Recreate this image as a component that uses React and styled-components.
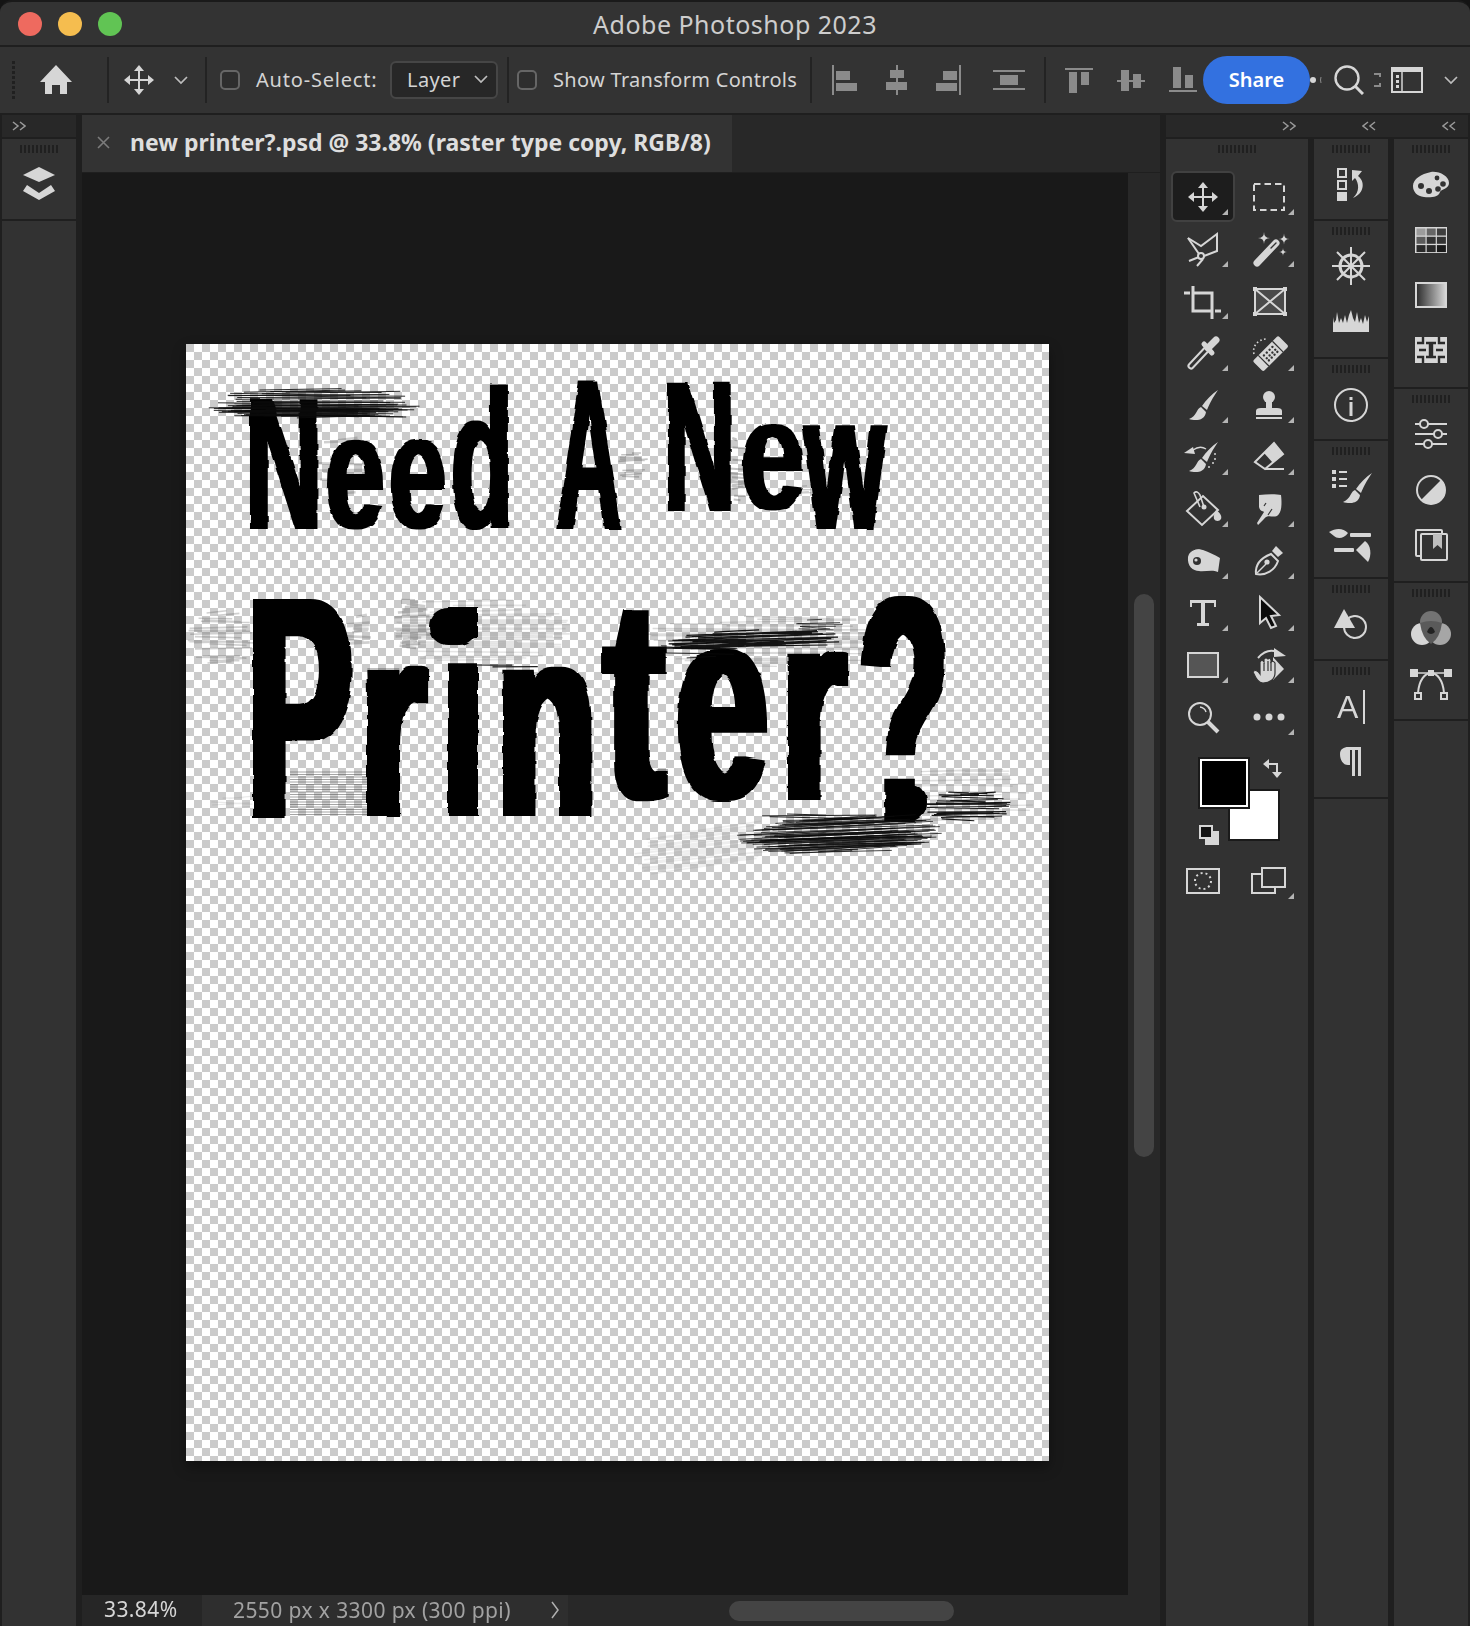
import React from "react";
import styled, { createGlobalStyle } from "styled-components";

const C = "#d6d6d6";
const BG = "#323232";
const GREY = "#8b8b8b";

const GlobalStyle = createGlobalStyle`
  html, body {
    margin: 0;
    padding: 0;
    background: #141414;
  }
  * {
    box-sizing: border-box;
  }
`;

const Window = styled.div`
  width: 1470px;
  height: 1626px;
  display: flex;
  flex-direction: column;
  background: #1f1f1f;
  border-top: 2px solid #1a1a1a;
  border-radius: 12px 12px 0 0;
  overflow: hidden;
  font-family: "Noto Sans", "Liberation Sans", sans-serif;
`;

const TitleBar = styled.div`
  height: 43px;
  flex: none;
  display: grid;
  grid-template-columns: 1fr auto 1fr;
  align-items: center;
  background: #333333;
  margin-bottom: 2px;
`;

const Lights = styled.div`
  display: flex;
  gap: 16px;
  padding-left: 18px;
`;

const Light = styled.span`
  width: 24px;
  height: 24px;
  border-radius: 50%;
  background: ${(p) => p.$color};
`;

const Title = styled.div`
  font-size: 25px;
  color: #cdcdcd;
  letter-spacing: 0.5px;
  padding-top: 1px;
  white-space: nowrap;
`;

const OptionsBar = styled.div`
  height: 66px;
  flex: none;
  display: flex;
  align-items: center;
  padding-left: 12px;
  background: #333333;
`;

const Slot = styled.svg`
  flex: none;
  display: block;
  margin-left: ${(p) => p.$ml || 0}px;
`;

const BarGrip = styled.div`
  width: 3px;
  height: 38px;
  flex: none;
  background: repeating-linear-gradient(180deg, #202020 0 3px, transparent 3px 5px);
`;

const BarSep = styled.div`
  width: 2px;
  height: 46px;
  flex: none;
  margin-left: ${(p) => p.$ml}px;
  background: #232323;
`;

const CheckBox = styled.div`
  width: 20px;
  height: 20px;
  flex: none;
  margin-left: ${(p) => p.$ml}px;
  border: 2px solid #666666;
  border-radius: 5px;
  background: #2e2e2e;
`;

const OptionLabel = styled.div`
  flex: none;
  width: ${(p) => p.$w}px;
  margin-left: 16px;
  padding-bottom: 2px;
  font-size: 20px;
  letter-spacing: ${(p) => p.$spacing}px;
  color: #d4d4d4;
  white-space: nowrap;
`;

const Select = styled.div`
  width: 108px;
  height: 38px;
  flex: none;
  display: flex;
  align-items: center;
  justify-content: space-between;
  padding: 0 8px 2px 15px;
  background: #272727;
  border: 2px solid #464646;
  border-radius: 6px;
  font-size: 20px;
  letter-spacing: 0.4px;
  color: #d4d4d4;
`;

const ShareButton = styled.div`
  width: 107px;
  height: 48px;
  flex: none;
  margin-left: ${(p) => p.$ml}px;
  display: flex;
  align-items: center;
  justify-content: center;
  padding-bottom: 2px;
  background: #3371e0;
  border-radius: 24px;
  color: #ffffff;
  font-size: 20px;
  font-weight: 600;
`;

const Workspace = styled.div`
  flex: 1;
  min-height: 0;
  display: flex;
  padding-top: 2px;
  background: #1f1f1f;
`;

const LeftDock = styled.div`
  width: 74px;
  flex: none;
  margin: 0 6px 0 2px;
  display: flex;
  flex-direction: column;
  gap: 2px;
`;

const CollapseRow = styled.div`
  height: 22px;
  flex: none;
  display: flex;
  align-items: center;
  background: #282828;
  padding-left: 10px;
`;

const Main = styled.div`
  width: 1078px;
  flex: none;
  display: flex;
  flex-direction: column;
`;

const TabBar = styled.div`
  height: 57px;
  flex: none;
  margin-bottom: 1px;
  display: flex;
  background: #282828;
`;

const Tab = styled.div`
  width: 650px;
  display: flex;
  align-items: center;
  padding: 0 0 3px 15px;
  gap: 20px;
  background: #333333;
  color: #dedede;
  font-size: 23px;
  font-weight: 700;
  white-space: nowrap;
`;

const CanvasRow = styled.div`
  flex: 1;
  min-height: 0;
  display: flex;
`;

const Canvas = styled.div`
  width: 1046px;
  flex: none;
  padding: 171px 0 0 104px;
  background: #191919;
`;

const Doc = styled.div`
  width: 863px;
  height: 1117px;
  background-color: #ffffff;
  background-image: conic-gradient(
    #cbcbcb 0 25%,
    transparent 0 50%,
    #cbcbcb 0 75%,
    transparent 0
  );
  background-size: 16px 16px;
  background-position: 8px 0;
  box-shadow: 0 6px 12px rgba(0, 0, 0, 0.35);
  svg {
    display: block;
  }
`;

const ScrollTrack = styled.div`
  flex: 1;
  padding: 421px 6px 0;
  background: #282828;
`;

const ScrollThumb = styled.div`
  height: 563px;
  border-radius: 10px;
  background: #444444;
`;

const StatusBar = styled.div`
  height: 31px;
  flex: none;
  display: flex;
  background: #282828;
  font-size: 21px;
  letter-spacing: 0.4px;
`;

const ZoomValue = styled.div`
  width: 120px;
  padding-left: 22px;
  background: #262626;
  color: #d6d6d6;
  line-height: 29px;
`;

const DocInfo = styled.div`
  width: 366px;
  display: flex;
  align-items: center;
  justify-content: space-between;
  padding: 0 8px 2px 31px;
  background: #2e2e2e;
  color: #a2a2a2;
`;

const StatusScroll = styled.div`
  width: 225px;
  height: 20px;
  margin: 6px 0 0 161px;
  border-radius: 10px;
  background: #444444;
`;

const RightDock = styled.div`
  width: 302px;
  flex: none;
  margin: 0 2px 0 6px;
  display: flex;
  flex-direction: column;
  gap: 2px;
`;

const TopRow = styled.div`
  display: grid;
  grid-template-columns: 142px 74px 74px;
  column-gap: 6px;
  background: #282828;
`;

const DockChevrons = styled.div`
  display: flex;
  align-items: center;
  justify-content: flex-end;
  height: 22px;
  padding-right: 12px;
`;

const Columns = styled.div`
  flex: 1;
  min-height: 0;
  display: grid;
  grid-template-columns: 142px 74px 74px;
  column-gap: 6px;
`;

const Column = styled.div`
  display: flex;
  flex-direction: column;
  gap: 2px;
  min-height: 0;
`;

const Panel = styled.div`
  flex: ${(p) => (p.$h ? `0 0 ${p.$h}px` : "1")};
  display: flex;
  flex-direction: column;
  align-items: center;
  padding-top: 6px;
  background: #323232;
`;

const Grip = styled.div`
  width: 38px;
  height: 8px;
  flex: none;
  margin-bottom: 4px;
  background: repeating-linear-gradient(90deg, #202020 0 2px, transparent 2px 4px);
`;

const PanelIcon = styled.div`
  height: 55px;
  width: 100%;
  flex: none;
  display: flex;
  align-items: center;
  justify-content: center;
`;

const ToolGrid = styled.div`
  width: 132px;
  margin: ${(p) => p.$mt}px 0 0 -2px;
  display: grid;
  grid-template-columns: repeat(2, 66px);
  grid-auto-rows: 52px;
`;

const ToolCell = styled.div`
  position: relative;
  display: flex;
  align-items: center;
  justify-content: center;
  svg {
    position: relative;
  }
  ${(p) =>
    p.$active &&
    `&::before {
      content: "";
      position: absolute;
      inset: 0 1px 1px 1px;
      background: #1d1d1d;
      border: 2px solid #414141;
      border-radius: 6px;
    }`}
  ${(p) =>
    p.$corner &&
    `&::after {
      content: "";
      position: absolute;
      right: 8px;
      bottom: 8px;
      width: 6px;
      height: 6px;
      background: #b4b4b4;
      clip-path: polygon(100% 0, 100% 100%, 0 100%);
    }`}
`;

const ColorArea = styled.div`
  position: relative;
  width: 132px;
  height: 112px;
  flex: none;
  margin-left: -2px;
`;

const Swatch = styled.div`
  position: absolute;
  left: ${(p) => p.$x}px;
  top: ${(p) => p.$y}px;
  width: 52px;
  height: 52px;
  background: ${(p) => p.$fill};
  border: 2px solid #1a1a1a;
  ${(p) => p.$ring && "outline: 2px solid #ffffff; outline-offset: -4px;"}
`;

const Floating = styled.svg`
  position: absolute;
  left: ${(p) => p.$x}px;
  top: ${(p) => p.$y}px;
`;

const ICON_TEXT = "'Liberation Sans', sans-serif";

// all icons are drawn around 0,0 in real pixels
const Icon = ({ children, size = 52 }) => (
  <svg width={size} height={size} viewBox={`${-size / 2} ${-size / 2} ${size} ${size}`}>
    {children}
  </svg>
);

const star = (x, y, r) =>
  `M${x},${y - r}Q${x},${y} ${x + r},${y}Q${x},${y} ${x},${y + r}Q${x},${y} ${x - r},${y}Q${x},${y} ${x},${y - r}Z`;

const MoveGlyph = () => (
  <g fill={C}>
    <path d="M-1,-11h2v10h10v2h-10v10h-2v-10h-10v-2h10z" />
    <path d="M0,-15l5,6h-10z" />
    <path d="M0,15l5,-6h-10z" />
    <path d="M-15,0l6,-5v10z" />
    <path d="M15,0l-6,-5v10z" />
  </g>
);

const Marquee = () => (
  <path d="M-15,-13H15V13H-15Z" fill="none" stroke={C} strokeWidth="2" strokeDasharray="6.5 4" />
);

const Lasso = () => (
  <g fill="none" stroke={C} strokeWidth="2">
    <path d="M-15,-11L-2,-3L14,-15V2L1,7" />
    <path d="M-15,-11L-4,5" />
    <circle cx="-2" cy="7" r="3" />
    <path d="M-4,8L-14,12M0,10L-6,17" />
  </g>
);

const Wand = () => (
  <g>
    <path d="M-12,14L7,-6" stroke={C} strokeWidth="7" strokeLinecap="round" />
    <path d="M2,-1L7,-6" stroke={BG} strokeWidth="1.4" strokeLinecap="round" />
    <path d={star(-5, -11, 6)} fill={C} />
    <path d={star(15, -10, 5.5)} fill={C} />
    <path d={star(14, 3, 4)} fill={C} />
  </g>
);

const Crop = () => (
  <path
    d="M-10,-15V10H9M-10,-8H9V18M-19,-8H-13M12,10H18"
    fill="none"
    stroke={C}
    strokeWidth="3"
  />
);

const Frame = () => (
  <g transform="translate(1,0)">
    <rect x="-15" y="-12" width="30" height="25" fill="#4a4a4a" stroke={C} strokeWidth="2" />
    <path d="M-15,-12L15,13M15,-12L-15,13" stroke={C} strokeWidth="2" />
    <g fill={C}>
      <rect x="-17" y="-14" width="4" height="4" />
      <rect x="13" y="-14" width="4" height="4" />
      <rect x="-17" y="11" width="4" height="4" />
      <rect x="13" y="11" width="4" height="4" />
    </g>
  </g>
);

const Dropper = () => (
  <g fill="none" strokeLinecap="round">
    <path d="M-12,13L3,-3" stroke={C} strokeWidth="7" />
    <path d="M-12,13L3,-3" stroke={BG} strokeWidth="3" />
    <path d="M1,-9L9,0" stroke={C} strokeWidth="5" />
    <path d="M5,-5L13,-13" stroke={C} strokeWidth="7" />
  </g>
);

const Healing = () => (
  <g>
    <g transform="translate(2,1) rotate(-45)">
      <rect x="-18" y="-8" width="36" height="15" rx="2" fill={C} />
      <g fill={BG}>
        {[-6, -2, 2, 6].map((x) =>
          [-4, 0, 3].map((y) => <circle key={`${x}${y}`} cx={x} cy={y} r="1.2" />)
        )}
      </g>
      <path d="M-10,-8V7M10,-8V7" stroke={BG} strokeWidth="1.2" />
    </g>
    <path d="M-15,1C-17,-7 -11,-14 -2,-14" fill="none" stroke={C} strokeWidth="1.6" strokeDasharray="1.6 2.4" />
  </g>
);

const Brush = () => (
  <g fill={C}>
    <path d="M15,-15C10,-8 6,0 4,5L-1,1C3,-5 9,-11 15,-15Z" />
    <path d="M-2,2C-7,4 -6,11 -14,14C-8,16 2,16 3,7Z" />
  </g>
);

const Stamp = () => (
  <g fill={C}>
    <circle cx="0" cy="-8" r="6" />
    <rect x="-3" y="-4" width="6" height="8" />
    <path d="M-13,10V6Q-13,3 -8,3H8Q13,3 13,6V10Z" />
    <rect x="-13" y="12" width="26" height="2" />
  </g>
);

const HistoryBrush = () => (
  <g>
    <Brush />
    <path d="M-19,-4L-10,-10L-8,-3Z" fill={C} />
    <path d="M-10,-7Q-3,-12 3,-8" fill="none" stroke={C} strokeWidth="1.4" />
    <g fill={C}>
      <circle cx="12" cy="-3" r="1" />
      <circle cx="12" cy="2" r="1" />
      <circle cx="10" cy="6" r="1" />
      <circle cx="6" cy="10" r="1" />
    </g>
  </g>
);

const Eraser = () => (
  <g>
    <path d="M-14,5L5,-14L14,-3L-4,12Z" fill="none" stroke={C} strokeWidth="2" />
    <path d="M-5,-4L5,-14L14,-3L4,6Z" fill={C} />
    <path d="M-4,12H15" stroke={C} strokeWidth="2" />
  </g>
);

const Bucket = () => (
  <g>
    <path d="M-16,2L0,-13L15,1L-1,16Z" fill="none" stroke={C} strokeWidth="2" />
    <path d="M-3,-2L-9,-16Q-6,-19 -3,-14L1,-2" fill="none" stroke={C} strokeWidth="1.6" />
    <circle cx="1" cy="-2" r="2.5" fill={C} />
    <path d="M13,1C18,4 19,8 18,10A4,4 0 0 1 11,10C10,7 12,4 13,1Z" fill={C} />
  </g>
);

const Smudge = () => (
  <g>
    <path
      d="M-10,-14C-2,-15 8,-15 12,-14C13,-6 13,4 8,7C3,9 -1,5 -5,10L-11,16L-12,14L-5,3C-5,2 -9,3 -10,-2Z"
      fill={C}
    />
    <path d="M-5,-3L-3,-6M-1,6L3,0" stroke={BG} strokeWidth="1.2" />
  </g>
);

const Dodge = () => (
  <g>
    <path
      d="M-15,-4C-13,-12 -6,-13 0,-11C6,-9 12,-6 17,-3L15,11C9,8 2,11 -4,10C-10,10 -16,5 -15,-4Z"
      fill={C}
    />
    <circle cx="-6" cy="0" r="4" fill={BG} />
    <circle cx="-7" cy="-1" r="1.6" fill={C} />
    <path d="M-14,-8Q-8,-14 0,-12" stroke={BG} strokeWidth="1" fill="none" />
  </g>
);

const Pen = () => (
  <g>
    <path d="M-13,13C-14,4 -8,-3 2,-7L9,0C6,9 -3,15 -13,13Z" fill="none" stroke={C} strokeWidth="2" />
    <path d="M3,-10L7,-15L14,-8L9,-4Z" fill={C} />
    <path d="M-12,12L-3,3" stroke={C} strokeWidth="1.4" />
    <circle cx="-2" cy="1" r="2.6" fill={C} />
  </g>
);

const TypeTool = () => (
  <path d="M-13,-13H13V-6H11V-10H2V10H6V13H-6V10H-2V-10H-11V-6H-13Z" fill={C} />
);

const PathSelect = () => (
  <path
    d="M-9,-16L10,2L2,3L7,13L2,15L-3,5L-9,10Z"
    fill="#0c0c0c"
    stroke={C}
    strokeWidth="2"
  />
);

const RectTool = () => (
  <rect x="-15" y="-12" width="30" height="24" fill="#555555" stroke={C} strokeWidth="2" />
);

const HandRotate = () => (
  <g>
    <path d="M4,-8L15,4L4,15Z" fill={C} />
    <path d="M-11,-7Q-2,-17 8,-13" fill="none" stroke={C} strokeWidth="2" />
    <path d="M5,-17L17,-9L5,-8Z" fill={C} />
    <path
      d="M-16,7C-14,4 -11,6 -9,9V-3Q-7,-6 -5,-3V-6Q-3,-8 -1,-6V-6Q1,-8 2,-5V-3Q4,-5 6,-2V8C6,14 1,18 -6,18C-11,18 -13,13 -16,7Z"
      fill={C}
      stroke={BG}
      strokeWidth="1.2"
    />
    <path d="M-5,-2V6M-1,-4V6M2,-3V6" stroke={BG} strokeWidth="1.2" />
  </g>
);

const ZoomTool = () => (
  <g fill="none" stroke={C}>
    <circle cx="-3" cy="-3" r="11" strokeWidth="2" />
    <path d="M5,5L15,15" strokeWidth="4" />
    <path d="M-3,-10Q2,-9 3,-5" strokeWidth="1.4" />
  </g>
);

const More = () => (
  <g fill={C}>
    <circle cx="-12" cy="0" r="3.5" />
    <circle cx="0" cy="0" r="3.5" />
    <circle cx="12" cy="0" r="3.5" />
  </g>
);

const QuickMask = () => (
  <g fill="none" stroke={C}>
    <rect x="-16" y="-12" width="32" height="24" strokeWidth="2" />
    <circle cx="0" cy="0" r="8" strokeWidth="2" strokeDasharray="2 3" />
  </g>
);

const ScreenMode = () => (
  <g stroke={C} strokeWidth="2">
    <rect x="-17" y="-7" width="23" height="19" fill="none" />
    <rect x="-7" y="-13" width="23" height="19" fill={BG} />
  </g>
);

const HistoryIcon = () => (
  <g transform="translate(0,-1)">
    <g fill="none" stroke={C} strokeWidth="2">
      <rect x="-13" y="-15" width="8" height="8" />
      <rect x="-13" y="-3" width="8" height="8" />
    </g>
    <rect x="-14" y="8" width="10" height="9" fill={C} />
    <path d="M1,-14L11,-13L7,-8C14,-3 14,9 2,14C9,8 8,-1 4,-6L1,-3Z" fill={C} />
  </g>
);

const Navigator = () => (
  <g fill="none" stroke={C} transform="translate(0,-1)">
    <circle r="11" strokeWidth="3" />
    <path d="M-19,0H19M0,-19V19M-14,-14L14,14M14,-14L-14,14" strokeWidth="2" />
  </g>
);

const Histogram = () => (
  <path
    transform="translate(0,-1)"
    d="M-18,11V-4L-17,2L-15,-1L-14,-9L-12,2L-10,-3L-8,2L-6,-6L-4,2L-2,-6L0,-11L2,-3L4,1L6,-9L8,2L10,-3L12,3L14,-6L16,1L18,-5V11Z"
    fill={C}
  />
);

const Info = () => (
  <g>
    <circle cx="0" cy="0" r="16" fill="none" stroke={C} strokeWidth="2" />
    <rect x="-1.5" y="-3" width="3" height="14" fill={C} />
    <rect x="-1.5" y="-8" width="3" height="3" fill={C} />
  </g>
);

const BrushPresets = () => (
  <g>
    <g fill={C}>
      <rect x="-19" y="-17" width="4" height="4" />
      <rect x="-19" y="-10" width="4" height="4" />
      <rect x="-19" y="-3" width="4" height="4" />
      <rect x="-12" y="-16" width="8" height="2" />
      <rect x="-12" y="-9" width="8" height="2" />
      <rect x="-12" y="-2" width="8" height="2" />
    </g>
    <g transform="translate(6,1)">
      <Brush />
    </g>
  </g>
);

const BrushSettings = () => (
  <g fill={C}>
    <path d="M-22,-10C-15,-14 -8,-14 -3,-9C-7,-3 -14,-3 -17,-6Z" />
    <rect x="-1" y="-9" width="21" height="4" rx="1" />
    <rect x="-17" y="6" width="20" height="4" rx="1" />
    <path d="M5,8L14,-1C20,3 21,13 17,20Z" />
  </g>
);

const ShapeIcon = () => (
  <g transform="translate(0,-1)">
    <path d="M-17,4L-7,-15L4,4Z" fill={C} />
    <circle cx="4" cy="3" r="11" fill="none" stroke={C} strokeWidth="2" />
  </g>
);

const CharacterIcon = () => (
  <g>
    <text x="-14" y="11" fontFamily={ICON_TEXT} fontSize="32" fill={C}>
      A
    </text>
    <rect x="12" y="-17" width="2" height="34" fill={C} />
  </g>
);

const Paragraph = () => (
  <g fill={C}>
    <path d="M-11,-8C-11,-13 -7,-15 -3,-15H10V-12H4V14H1V-12H-1V3H-3C-8,3 -11,-2 -11,-8Z" />
    <rect x="7" y="-14" width="3" height="28" />
  </g>
);

const Palette = () => (
  <g>
    <path
      d="M-18,1C-18,-6 -10,-11 0,-13C8,-14 18,-9 18,-2C18,4 10,4 9,7C8,12 -1,13 -7,12C-14,11 -18,7 -18,1Z"
      fill={C}
    />
    <g fill={BG}>
      <circle cx="-10" cy="1" r="3" />
      <circle cx="-2" cy="6" r="3" />
      <circle cx="7" cy="4" r="2.8" />
      <circle cx="12" cy="-1" r="2.8" />
      <circle cx="6" cy="-7" r="2.4" />
    </g>
  </g>
);

const Swatches = () => {
  const fills = ["#9c9c9c", "#666666", "#3e3e3e", "#5c5c5c", "#333333", "#333333", "#2a2a2a", "#2a2a2a", "#1a1a1a"];
  return (
    <g>
      <rect x="-16" y="-13" width="32" height="26" fill={C} />
      {fills.map((f, i) => (
        <rect
          key={i}
          x={-14.5 + (i % 3) * 10.2}
          y={-11.5 + Math.floor(i / 3) * 8.3}
          width="9"
          height="7"
          fill={f}
        />
      ))}
    </g>
  );
};

const GradientIcon = () => (
  <g>
    <defs>
      <linearGradient id="panelGradient">
        <stop offset="0" stopColor="#2a2a2a" />
        <stop offset="1" stopColor="#d8d8d8" />
      </linearGradient>
    </defs>
    <rect x="-15" y="-12" width="30" height="24" fill="url(#panelGradient)" stroke={C} strokeWidth="2" />
  </g>
);

const PatternIcon = () => (
  <g>
    <rect x="-16" y="-13" width="32" height="26" fill={C} />
    <path
      d="M-8,-13V-7H-14M8,-13V-7H14M-8,13V7H-14M8,13V7H14M-5,-7H-1V7H-5M5,-7H1V7H5M-12,0H-5M5,0H12M-2,0H2"
      fill="none"
      stroke="#2b2b2b"
      strokeWidth="2.4"
    />
  </g>
);

const Adjust = () => (
  <g stroke={C} strokeWidth="2" transform="translate(0,-1)">
    <path d="M-16,-10H16M-16,0H16M-16,10H16" />
    <circle cx="-7" cy="-10" r="4" fill={BG} />
    <circle cx="7" cy="0" r="4" fill={BG} />
    <circle cx="-3" cy="10" r="4" fill={BG} />
  </g>
);

const Contrast = () => (
  <g>
    <circle r="14" fill="none" stroke={C} strokeWidth="2" />
    <path d="M10,-10A14,14 0 0 1 -10,10Z" fill={C} />
  </g>
);

const Library = () => (
  <g fill="none" stroke={C} strokeWidth="2">
    <rect x="-15" y="-15" width="26" height="26" rx="1" />
    <rect x="-10" y="-11" width="26" height="26" rx="1" fill={BG} />
    <path d="M2,-11H11V4L6.5,0L2,4Z" fill="#bdbdbd" stroke="none" />
  </g>
);

const Channels = () => (
  <g transform="translate(0,-1)">
    <circle cx="0" cy="-6" r="11" fill="#737373" />
    <circle cx="-9" cy="6" r="11" fill={C} />
    <circle cx="9" cy="6" r="11" fill="#a6a6a6" />
    <path d="M-11,-5Q0,-9 11,-5Q9,10 0,16Q-9,10 -11,-5Z" fill="#5a5a5a" />
    <path d="M-4,4Q0,-6 4,4Q0,8 -4,4Z" fill="#222222" />
  </g>
);

const PathsIcon = () => (
  <g>
    <path d="M-13,9C-12,-4 -6,-11 0,-11C6,-11 12,-4 13,9" fill="none" stroke={C} strokeWidth="2" />
    <path d="M-17,-11H17" stroke={C} strokeWidth="1.4" />
    <g fill={C}>
      <rect x="-21" y="-15" width="8" height="8" />
      <rect x="13" y="-15" width="8" height="8" />
      <rect x="-3" y="-14" width="6" height="6" />
    </g>
    <g fill="none" stroke={C} strokeWidth="2">
      <rect x="-16" y="9" width="6" height="6" />
      <rect x="10" y="9" width="6" height="6" />
    </g>
  </g>
);

const Layers = () => (
  <g fill={C} transform="translate(0,-2)">
    <path d="M0,-16L16,-8L0,-1L-16,-8Z" />
    <path d="M-16,8L-12,2L0,10L12,2L16,8L0,17Z" />
  </g>
);

const Chevrons = ({ left }) => (
  <svg width="14" height="10" viewBox="0 0 14 10">
    <path
      d={left ? "M6,1L1,5L6,9M13,1L8,5L13,9" : "M1,1L6,5L1,9M8,1L13,5L8,9"}
      fill="none"
      stroke="#9a9a9a"
      strokeWidth="1.5"
    />
  </svg>
);

const ChevronDown = ({ ml, color = "#bdbdbd" }) => (
  <Slot $ml={ml} width="14" height="10" viewBox="0 0 14 10">
    <path d="M1,2L7,8L13,2" fill="none" stroke={color} strokeWidth="1.7" />
  </Slot>
);

// option bar glyphs use the page coordinates of the screenshot
const BarIcon = ({ x, w, ml, children }) => (
  <Slot $ml={ml} width={w} height="40" viewBox={`${x} 60 ${w} 40`}>
    <g fill={GREY}>{children}</g>
  </Slot>
);

const TOOLS = [
  [MoveGlyph, true],
  [Marquee, true],
  [Lasso, true],
  [Wand, true],
  [Crop, true],
  [Frame, false],
  [Dropper, true],
  [Healing, true],
  [Brush, true],
  [Stamp, true],
  [HistoryBrush, true],
  [Eraser, true],
  [Bucket, true],
  [Smudge, true],
  [Dodge, true],
  [Pen, true],
  [TypeTool, true],
  [PathSelect, true],
  [RectTool, true],
  [HandRotate, true],
  [ZoomTool, false],
  [More, true],
];

const MID_PANELS = [
  { h: 80, icons: [HistoryIcon] },
  { h: 136, icons: [Navigator, Histogram] },
  { h: 80, icons: [Info] },
  { h: 136, icons: [BrushPresets, BrushSettings] },
  { h: 80, icons: [ShapeIcon] },
  { h: 136, icons: [CharacterIcon, Paragraph] },
  { icons: [], noGrip: true },
];

const SIDE_PANELS = [
  { h: 248, icons: [Palette, Swatches, GradientIcon, PatternIcon] },
  { h: 192, icons: [Adjust, Contrast, Library] },
  { h: 136, icons: [Channels, PathsIcon] },
  { icons: [], noGrip: true },
];

// font-unit ink box of each bold glyph: left, right, bottom, top
const INK = {
  N: [137, 1342, 0, 1409],
  e: [82, 1055, -20, 1102],
  d: [84, 1108, -20, 1484],
  A: [0, 1479, 0, 1409],
  w: [4, 1590, 0, 1082],
  P: [137, 1274, 0, 1409],
  r: [143, 789, 0, 1102],
  i: [143, 424, 0, 1484],
  n: [143, 1119, 0, 1102],
  t: [47, 648, -16, 1331],
  "?": [83, 1165, 0, 1430],
};

// the boxes are inset by the filter's horizontal dilation
const LINE_ONE = [
  ["N", 252, 316, 398, 529],
  ["e", 329, 380, 440, 530],
  ["e", 393, 442, 440, 530],
  ["d", 455, 506, 385, 530],
  ["A", 556, 621, 381, 529],
  ["N", 670, 729, 381, 511],
  ["e", 745, 800, 423, 511],
  ["w", 805, 886, 424, 530],
];

const LINE_TWO = [
  ["P", 258, 345, 600, 817],
  ["r", 372, 425, 668, 816],
  ["i", 453, 473, 608, 816],
  ["n", 508, 586, 668, 816],
  ["t", 609, 662, 612, 799],
  ["e", 683, 761, 649, 800],
  ["r", 793, 845, 652, 799],
  ["?", 865, 942, 597, 821],
];

const glyphTransform = ([ch, x0, x1, y0, y1]) => {
  const [l, r, b, t] = INK[ch];
  const sx = (x1 - x0) / (r - l);
  const sy = (y1 - y0) / (t - b);
  return `translate(${x0 - l * sx},${y1 + b * sy}) scale(${sx},${sy})`;
};

const streaks = (seed, x0, x1, y0, y1, n, tilt = 0) => {
  let s = seed;
  const r = () => (s = (s * 16807) % 2147483647) / 2147483647;
  const cx = (x0 + x1) / 2;
  const hw = (x1 - x0) / 2;
  let d = "";
  for (let i = 0; i < n; i++) {
    const v = r() * 2 - 1;
    const y = (y0 + y1) / 2 + (v * (y1 - y0)) / 2;
    const half = hw * Math.sqrt(1 - v * v * 0.85) * (0.55 + r() * 0.45);
    const c = cx + (r() - 0.5) * (hw - half);
    const a = c - half;
    const b = c + half;
    const dy = (a - cx) * tilt;
    const ey = (b - cx) * tilt;
    d += `M${a.toFixed(1)} ${(y + dy).toFixed(1)}L${b.toFixed(1)} ${(y + ey + (r() - 0.5) * 5).toFixed(1)}`;
  }
  return d;
};

// x0, x1, y0, y1, count, width, opacity, tilt
const SMEARS = [
  [187, 255, 613, 663, 22, 1.6, 0.28],
  [394, 573, 600, 662, 40, 1.6, 0.16],
  [344, 372, 617, 650, 10, 2.6, 0.28],
  [392, 432, 600, 648, 16, 2.6, 0.3],
  [316, 380, 440, 495, 14, 2.4, 0.28],
  [616, 650, 453, 478, 10, 1.6, 0.35],
  [728, 748, 438, 500, 14, 2, 0.35],
  [798, 812, 486, 496, 4, 1.4, 0.3],
  [640, 905, 616, 666, 34, 1.4, 0.22],
  [883, 1040, 771, 822, 20, 1.2, 0.2],
  [632, 780, 828, 872, 30, 1.6, 0.1, -0.12],
  [205, 260, 798, 812, 6, 1.2, 0.12],
];

const SCRATCHES = [
  [205, 425, 390, 418, 50, 0.9, 0.95],
  [660, 845, 631, 648, 24, 1.2, 0.95, -0.03],
  [793, 845, 620, 632, 6, 1, 0.7],
  [658, 740, 640, 658, 8, 1, 0.8],
  [452, 552, 665, 667, 2, 1.2, 0.9],
  [925, 1011, 792, 821, 22, 1.1, 0.95],
  [753, 890, 814, 818, 3, 1, 0.9],
  [735, 945, 818, 852, 66, 0.8, 0.95, -0.04],
];

// the fine ruled lines between the P and the r
const ruledLines = () => {
  let d = "";
  for (let y = 772; y < 815; y += 2.5) {
    d += `M290 ${y}H372`;
  }
  return d;
};

const RoughFilter = ({ id, radius }) => (
  <filter
    id={id}
    filterUnits="userSpaceOnUse"
    x="186"
    y="344"
    width="863"
    height="1117"
    colorInterpolationFilters="sRGB"
  >
    <feTurbulence type="fractalNoise" baseFrequency="0.004 0.07" numOctaves="2" seed="4" result="n" />
    <feMorphology in="SourceGraphic" operator="dilate" radius={radius} result="fat" />
    <feDisplacementMap in="fat" in2="n" scale="5" xChannelSelector="R" yChannelSelector="G" />
    <feGaussianBlur stdDeviation="0.7" />
  </filter>
);

const Word = ({ letters, filter, children }) => (
  <g filter={`url(#${filter})`} fontFamily={ICON_TEXT} fontWeight="700" fontSize="2048" fill="#000000">
    {letters.map((l, i) => (
      <text key={i} transform={glyphTransform(l)} textRendering="geometricPrecision">
        {l[0]}
      </text>
    ))}
    {children}
  </g>
);

const Artwork = () => (
  <svg width="863" height="1117" viewBox="186 344 863 1117">
    <defs>
      <RoughFilter id="roughLight" radius="2 0.2" />
      <RoughFilter id="roughHeavy" radius="5 0.5" />
    </defs>
    {SMEARS.map(([a, b, c, d, n, w, o, t], i) => (
      <path key={i} d={streaks(i * 97 + 11, a, b, c, d, n, t)} stroke="#555555" strokeWidth={w} opacity={o} fill="none" />
    ))}
    <path d={ruledLines()} stroke="#444444" strokeWidth="0.8" opacity="0.6" />
    <Word letters={LINE_ONE} filter="roughLight" />
    <Word letters={LINE_TWO} filter="roughHeavy">
      <ellipse cx="454" cy="627" rx="19" ry="18" />
      <ellipse cx="906" cy="803" rx="16" ry="17" />
    </Word>
    {SCRATCHES.map(([a, b, c, d, n, w, o, t], i) => (
      <path key={i} d={streaks(i * 131 + 7, a, b, c, d, n, t)} stroke="#0a0a0a" strokeWidth={w} opacity={o} fill="none" />
    ))}
  </svg>
);

const PanelColumn = ({ panels }) => (
  <Column>
    {panels.map((panel, i) => (
      <Panel key={i} $h={panel.h}>
        {!panel.noGrip && <Grip />}
        {panel.icons.map((Glyph, j) => (
          <PanelIcon key={j}>
            <Icon>
              <Glyph />
            </Icon>
          </PanelIcon>
        ))}
      </Panel>
    ))}
  </Column>
);

export default function App() {
  return (
    <>
      <GlobalStyle />
      <Window>
        <TitleBar>
          <Lights>
            <Light $color="#ee6a5f" />
            <Light $color="#f5bd4f" />
            <Light $color="#61c454" />
          </Lights>
          <Title>Adobe Photoshop 2023</Title>
        </TitleBar>

        <OptionsBar>
          <BarGrip />
          <Slot $ml={25} width="32" height="32" viewBox="-16 -16 32 32">
            <path d="M0,-15L16,2H11V14H4V5H-4V14H-11V2H-16Z" fill={C} />
          </Slot>
          <BarSep $ml={35} />
          <Slot $ml={15} width="30" height="30" viewBox="-15 -15 30 30">
            <MoveGlyph />
          </Slot>
          <ChevronDown ml={20} />
          <BarSep $ml={17} />
          <CheckBox $ml={13} />
          <OptionLabel $w={134} $spacing={0.8}>Auto-Select:</OptionLabel>
          <Select>
            Layer
            <ChevronDown />
          </Select>
          <BarSep $ml={9} />
          <CheckBox $ml={8} />
          <OptionLabel $w={257} $spacing={0.3}>Show Transform Controls</OptionLabel>
          <BarSep $ml={0} />

          <BarIcon x={832} w={25} ml={20}>
            <rect x="832" y="65" width="2" height="30" />
            <rect x="836" y="71" width="14" height="9" />
            <rect x="836" y="83" width="21" height="8" />
          </BarIcon>
          <BarIcon x={886} w={21} ml={29}>
            <rect x="896" y="65" width="2" height="30" />
            <rect x="890" y="70" width="14" height="8" />
            <rect x="886" y="82" width="21" height="8" />
          </BarIcon>
          <BarIcon x={936} w={25} ml={29}>
            <rect x="959" y="65" width="2" height="30" />
            <rect x="943" y="71" width="14" height="9" />
            <rect x="936" y="83" width="21" height="8" />
          </BarIcon>
          <BarIcon x={993} w={32} ml={32}>
            <rect x="993" y="70" width="32" height="2" />
            <rect x="993" y="88" width="32" height="2" />
            <rect x="1000" y="75" width="18" height="10" />
          </BarIcon>
          <BarSep $ml={19} />
          <BarIcon x={1065} w={28} ml={19}>
            <rect x="1065" y="68" width="28" height="2" />
            <rect x="1069" y="72" width="8" height="21" />
            <rect x="1081" y="72" width="8" height="13" />
          </BarIcon>
          <BarIcon x={1117} w={28} ml={24}>
            <rect x="1117" y="80" width="28" height="2" />
            <rect x="1121" y="70" width="8" height="21" />
            <rect x="1133" y="74" width="8" height="14" />
          </BarIcon>
          <BarIcon x={1169} w={28} ml={24}>
            <rect x="1169" y="90" width="28" height="2" />
            <rect x="1173" y="67" width="8" height="21" />
            <rect x="1185" y="75" width="8" height="13" />
          </BarIcon>
          <ShareButton $ml={6}>Share</ShareButton>
          <Slot width="14" height="14" viewBox="1310 73 14 14">
            <circle cx="1313" cy="80" r="3" fill={C} />
            <path d="M1321,77Q1320,80 1321,83" stroke={GREY} strokeWidth="1" fill="none" />
          </Slot>
          <Slot $ml={10} width="30" height="30" viewBox="-15 -15 30 30">
            <circle cx="-2" cy="-2" r="11.5" fill="none" stroke={C} strokeWidth="2.4" />
            <path d="M6,6L14,14" stroke={C} strokeWidth="3" />
          </Slot>
          <Slot $ml={10} width="7" height="14" viewBox="0 0 7 14">
            <path d="M0,1H6V4M6,10V13H0" fill="none" stroke={GREY} strokeWidth="2" />
          </Slot>
          <Slot $ml={10} width="32" height="26" viewBox="0 0 32 26">
            <rect x="1" y="1" width="30" height="24" fill="none" stroke={C} strokeWidth="2" />
            <rect x="1" y="1" width="30" height="4" fill={C} />
            <path d="M11,5V25" stroke={C} strokeWidth="1.5" />
            <rect x="5" y="8" width="3" height="3" fill={C} />
            <rect x="5" y="13" width="3" height="3" fill={C} />
            <rect x="5" y="18" width="3" height="3" fill={C} />
          </Slot>
          <ChevronDown ml={21} />
        </OptionsBar>

        <Workspace>
          <LeftDock>
            <CollapseRow>
              <Chevrons />
            </CollapseRow>
            <Panel $h={80}>
              <Grip />
              <PanelIcon>
                <Icon>
                  <Layers />
                </Icon>
              </PanelIcon>
            </Panel>
            <Panel />
          </LeftDock>

          <Main>
            <TabBar>
              <Tab>
                <svg width="13" height="13" viewBox="0 0 13 13">
                  <path d="M1,1L12,12M12,1L1,12" stroke="#7c7c7c" strokeWidth="1.6" />
                </svg>
                new printer?.psd @ 33.8% (raster type copy, RGB/8)
              </Tab>
            </TabBar>
            <CanvasRow>
              <Canvas>
                <Doc>
                  <Artwork />
                </Doc>
              </Canvas>
              <ScrollTrack>
                <ScrollThumb />
              </ScrollTrack>
            </CanvasRow>
            <StatusBar>
              <ZoomValue>33.84%</ZoomValue>
              <DocInfo>
                2550 px x 3300 px (300 ppi)
                <svg width="10" height="18" viewBox="0 0 10 18">
                  <path d="M2,1L8,9L2,17" fill="none" stroke="#b0b0b0" strokeWidth="1.5" />
                </svg>
              </DocInfo>
              <StatusScroll />
            </StatusBar>
          </Main>

          <RightDock>
            <TopRow>
              <DockChevrons>
                <Chevrons />
              </DockChevrons>
              <DockChevrons>
                <Chevrons left />
              </DockChevrons>
              <DockChevrons>
                <Chevrons left />
              </DockChevrons>
            </TopRow>
            <Columns>
              <Column>
                <Panel>
                  <Grip />
                  <ToolGrid $mt={14}>
                    {TOOLS.map(([Glyph, corner], i) => (
                      <ToolCell key={i} $active={i === 0} $corner={corner}>
                        <Icon>
                          <Glyph />
                        </Icon>
                      </ToolCell>
                    ))}
                  </ToolGrid>
                  <ColorArea>
                    <Swatch $x={58} $y={46} $fill="#ffffff" />
                    <Swatch $x={28} $y={14} $fill="#000000" $ring />
                    <Floating $x={92} $y={14} width="22" height="22" viewBox="0 0 22 22">
                      <path d="M1,7L7,2V12Z" fill={C} />
                      <path d="M6,7H15V16" fill="none" stroke={C} strokeWidth="2" />
                      <path d="M10,15H20L15,21Z" fill={C} />
                    </Floating>
                    <Floating $x={29} $y={82} width="20" height="20" viewBox="0 0 20 20">
                      <rect x="6" y="6" width="14" height="14" fill={C} />
                      <rect x="1" y="1" width="12" height="12" fill="#111111" stroke={C} strokeWidth="2" />
                    </Floating>
                  </ColorArea>
                  <ToolGrid $mt={0}>
                    <ToolCell>
                      <Icon>
                        <QuickMask />
                      </Icon>
                    </ToolCell>
                    <ToolCell $corner>
                      <Icon>
                        <ScreenMode />
                      </Icon>
                    </ToolCell>
                  </ToolGrid>
                </Panel>
              </Column>
              <PanelColumn panels={MID_PANELS} />
              <PanelColumn panels={SIDE_PANELS} />
            </Columns>
          </RightDock>
        </Workspace>
      </Window>
    </>
  );
}
